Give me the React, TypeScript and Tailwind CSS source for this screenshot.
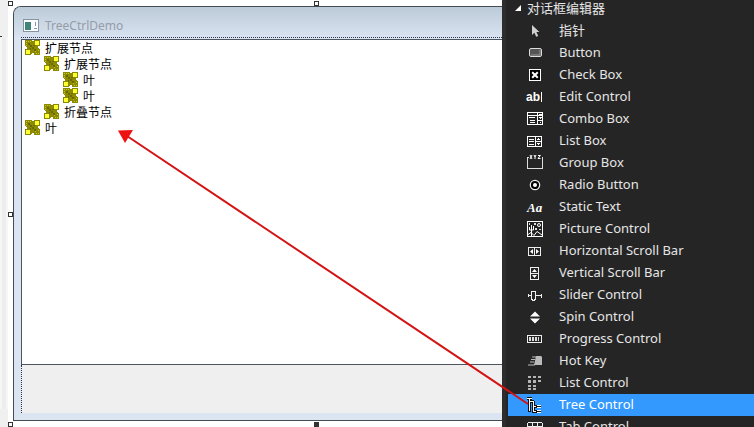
import { type ReactNode } from "react";
import clsx from "clsx";

const FONT = "font-['Noto_Sans','Noto_Sans_CJK_SC',sans-serif]";

const toolIcons: Record<string, ReactNode> = {
  pointer: <path fill="#d0d0d0" d="M5 2v10l2.4-2.2 1.8 4 2-.9-1.8-3.8H12.4z" />,
  button: (
    <>
      <rect x="2.5" y="3.5" width="12" height="8" rx="1.5" fill="#555" stroke="#ddd" />
      <path d="M4 10h9V5" fill="none" stroke="#999" />
    </>
  ),
  check: (
    <>
      <rect x="2.5" y="2.5" width="11" height="11" fill="#000" stroke="#fff" />
      <path d="M5.2 5.2l5.6 5.6M10.8 5.2l-5.6 5.6" stroke="#fff" strokeWidth="2" />
    </>
  ),
  edit: (
    <>
      <text x="-1" y="12" fontSize="12" fontWeight="bold" fontFamily="Liberation Sans" fill="#fff">ab</text>
      <path d="M14.5 3v10" stroke="#fff" />
    </>
  ),
  combo: (
    <path
      fill="none"
      stroke="#fff"
      shapeRendering="crispEdges"
      d="M.5 4.5h15v9H.5zM.5 1.5h15v3H.5zM10.5 2v12M10 9.5h5M2 6.5h6M3 9.5h5M3 11.5h5M12 6.5h3M13 7.5h1M13 11.5h1M12 3.5h3"
    />
  ),
  list: (
    <path
      fill="none"
      stroke="#fff"
      shapeRendering="crispEdges"
      d="M.5 3.5h14v10H.5zM8.5 4v9M9 8.5h5M2 6.5h5M2 8.5h5M2 11.5h5M11 5.5h1M10 6.5h3M10 10.5h3M11 11.5h1"
    />
  ),
  group: (
    <>
      <path fill="none" stroke="#ddd" shapeRendering="crispEdges" d="M2 2.5H.5v11h15v-11H15" />
      <path fill="none" stroke="#fff" d="M3 0l2 4M5 0L3 4M7 0l1 2 1-2M8 2v2M11 .5h2.400L11 3.500h2.500" />
    </>
  ),
  radio: (
    <>
      <circle cx="8" cy="8" r="4.7" fill="#000" stroke="#eee" strokeWidth="1.2" />
      <circle cx="8" cy="8" r="2" fill="#fff" />
    </>
  ),
  text: (
    <text x="0" y="13" fontSize="13" fontStyle="italic" fontWeight="bold" fontFamily="Liberation Serif" fill="#fff">Aa</text>
  ),
  picture: (
    <>
      <rect x=".5" y=".5" width="15" height="15" fill="#222" stroke="#fff" />
      <path fill="none" stroke="#fff" d="M4.5 15V4M2.5 6v3h2M6.5 5v4h-2M1 13.5l3-2 3 3 3-4 5 3.5" />
      <circle cx="12" cy="4" r="1.5" fill="none" stroke="#fff" />
      <path d="M7 2h2v2H7zM8 7h2v2H8zM12 8h2v1h-2zM2 2h1v2H2z" fill="#ddd" />
    </>
  ),
  hscroll: (
    <>
      <path fill="none" stroke="#eee" shapeRendering="crispEdges" d="M1.5 4.5h12v8h-12zM7.5 4v9" />
      <path fill="#fff" d="M6 6v5L3 8.5zM9 6v5l3-2.5z" />
    </>
  ),
  vscroll: (
    <>
      <path fill="none" stroke="#eee" shapeRendering="crispEdges" d="M3.5 2.5h8v12h-8zM3 8.5h9" />
      <path fill="#fff" d="M5 7h5L7.5 4zM5 10h5l-2.5 3z" />
    </>
  ),
  slider: (
    <path fill="none" stroke="#eee" shapeRendering="crispEdges" d="M1 8.5h3M9 8.5h6M14.5 7v4M1.5 7v3M4.5 4.5h4v8h-1v1h-2v-1h-1z" />
  ),
  spin: <path fill="#fff" d="M3 7.6h10L8 2.6zM3 9.4h10l-5 5z" />,
  progress: (
    <>
      <path fill="none" stroke="#eee" shapeRendering="crispEdges" d="M.5 4.5h14v7H.5z" />
      <path fill="#ddd" d="M2 6h2v4H2zM5 6h2v4H5zM8 6h2v4H8zM11 6h1v4h-1z" />
    </>
  ),
  hotkey: (
    <>
      <path fill="#bbb" d="M9 3h5l1 1v8H9L7 12z" />
      <path fill="none" stroke="#bbb" strokeWidth="1.2" d="M5 4h4M4 6.5h4M3 9h4M1 12h7" />
    </>
  ),
  grid: (
    <path
      fill="#b4b4b4"
      d="M1 1h3v2H1zM6 1h3v2H6zM11 1h3v2h-3zM1 5h3v3H1zM6 5h3v3H6zM11 5h3v2h-3zM1 10h3v2H1zM6 10h3v2H6zM1 13h3v2H1zM6 13h3v2H6z"
    />
  ),
  tree: (
    <>
      <path fill="none" stroke="#111" strokeWidth="3" d="M0 1.5h5M2.5 1v14M3 4.5h4M6.5 4v12M7 9.5h7M7 14.5h7" />
      <path
        fill="none"
        stroke="#fff"
        shapeRendering="crispEdges"
        d="M0 1.5h5M2.5 2v12M3 4.5h4M6.5 5v10M7 9.5h2M7 14.5h2M10 8.5h4M10 10.5h4M10 13.5h4M10 15.5h4"
      />
    </>
  ),
  tab: (
    <path
      fill="none"
      stroke="#eee"
      shapeRendering="crispEdges"
      d="M.5 16V4.5l1-1h13l1 1V16M1 7.5h15M5.5 4v3M10.5 4v3"
    />
  ),
};

const tools = [
  { label: "指针", icon: "pointer" },
  { label: "Button", icon: "button" },
  { label: "Check Box", icon: "check" },
  { label: "Edit Control", icon: "edit" },
  { label: "Combo Box", icon: "combo" },
  { label: "List Box", icon: "list" },
  { label: "Group Box", icon: "group" },
  { label: "Radio Button", icon: "radio" },
  { label: "Static Text", icon: "text" },
  { label: "Picture Control", icon: "picture" },
  { label: "Horizontal Scroll Bar", icon: "hscroll" },
  { label: "Vertical Scroll Bar", icon: "vscroll" },
  { label: "Slider Control", icon: "slider" },
  { label: "Spin Control", icon: "spin" },
  { label: "Progress Control", icon: "progress" },
  { label: "Hot Key", icon: "hotkey" },
  { label: "List Control", icon: "grid" },
  { label: "Tree Control", icon: "tree" },
  { label: "Tab Control", icon: "tab" },
];

const nodes = [
  { label: "扩展节点", indent: "pl-[3px]" },
  { label: "扩展节点", indent: "pl-[22px]" },
  { label: "叶", indent: "pl-[41px]" },
  { label: "叶", indent: "pl-[41px]" },
  { label: "折叠节点", indent: "pl-[22px]" },
  { label: "叶", indent: "pl-[3px]" },
];

function NodeIcon() {
  return (
    <svg viewBox="0 0 16 16" className="h-4 w-4 shrink-0" shapeRendering="crispEdges">
      <path fill="#8c8a00" d="M0 0h7v1h2V0h6v6h-2v2h1v1h1v6H9v-2H7v1H6v1H0V9h2V7H1V6H0z" />
      <path fill="#ffff30" d="M10 1h4v4h-4zM1 10h4v4H1z" />
      <path fill="#c8c61c" d="M1 1h1v1H1zM3 1h1v1H3zM1 3h1v1H1zM5 1h1v1H5zM1 5h1v1H1zM13 10h1v1h-1zM11 13h1v1h-1zM13 13h1v1h-1zM10 11h1v1h-1z" />
      <path fill="#6a6800" d="M3 3h2v2H3zM5 5h2v2H5zM7 7h2v2H7zM9 9h2v2H9zM8 5h2v1H8zM5 8h1v2H5z" />
    </svg>
  );
}

function Handle({ className }: { className: string }) {
  return <span className={clsx("absolute h-[5px] w-[5px] border border-[#333]", className)} />;
}

function DialogWindow() {
  return (
    <section className="mt-[6px] mb-[6px] ml-[13px] flex flex-1 flex-col overflow-hidden rounded-tl-lg border-y border-l border-[#444b52] bg-[#dae5f1]">
      <header className="flex h-[30px] items-center gap-[6px] bg-linear-to-b from-[#bccbd9] to-[#d8e2f0] pt-[7px] pl-[9px]">
        <svg viewBox="0 0 16 14" className="h-[14px] w-4" shapeRendering="crispEdges">
          <rect x=".5" y=".5" width="15" height="12" fill="#fff" stroke="#8795a2" />
          <path fill="#3f8579" d="M2 3h6v8H2z" />
          <path fill="#7898b8" d="M12 3h1v4h-1zM11 9h3v1h-3z" />
        </svg>
        <h1 className="font-['Noto_Sans',sans-serif] text-[12px] leading-4 text-[#959da7]">TreeCtrlDemo</h1>
      </header>
      <div className="ml-[7px] flex flex-1 flex-col border-t border-dotted border-[#26334f] pt-px">
        <ul className="flex-1 border border-r-0 border-[#4c5560] bg-white">
          {nodes.map((node, i) => (
            <li key={i} className={clsx("flex h-4 items-start gap-1", node.indent)}>
              <NodeIcon />
              <span className={clsx("text-[12px] leading-[18px] text-black", FONT)}>{node.label}</span>
            </li>
          ))}
        </ul>
        <div className="h-12 border-l border-dotted border-[#26334f] bg-[#efefef]" />
      </div>
      <div className="h-[7px]" />
    </section>
  );
}

function Toolbox() {
  return (
    <aside className={clsx("w-[252px] shrink-0 border-l-4 border-[#2d2d2d] bg-[#252525] pl-[2px] text-[13px] text-[#e6e6e6]", FONT)}>
      <h2 className="flex h-5 items-center gap-[5px] pb-1 pl-[6px] leading-4">
        <svg viewBox="0 0 8 8" className="h-2 w-2">
          <path d="M7 1v6H1z" fill="#fff" />
        </svg>
        对话框编辑器
      </h2>
      <ul>
        {tools.map((tool) => (
          <li key={tool.label}>
            <button
              type="button"
              className={clsx(
                "flex h-[22px] w-full items-center gap-4 pl-[19px] text-left whitespace-nowrap",
                tool.icon === "tree" && "bg-[#3399ff] text-white",
              )}
            >
              <svg viewBox="0 0 16 16" className="h-4 w-4 shrink-0 overflow-visible">
                {toolIcons[tool.icon]}
              </svg>
              {tool.label}
            </button>
          </li>
        ))}
      </ul>
    </aside>
  );
}

export default function App() {
  return (
    <div className="relative flex h-screen overflow-hidden bg-white">
      <main className="relative flex min-w-0 flex-1">
        <div className="absolute inset-y-0 left-0 flex w-2 flex-col bg-[#f0f0f0]">
          <span className="h-9" />
          <span className="h-px w-[2px] bg-[#333]" />
          <span className="flex-1 border-x-2 border-[#f6f6f6] bg-[#ededed]" />
          <span className="h-[18px]" />
        </div>
        <DialogWindow />
        <Handle className="top-px left-2 bg-white" />
        <Handle className="top-px left-[314px] bg-white" />
        <Handle className="top-[212px] left-2 bg-white" />
        <Handle className="bottom-0 left-2 bg-white" />
        <Handle className="bottom-0 left-[314px] bg-[#333]" />
      </main>
      <Toolbox />

      {/* Arrow from the toolbox entry to the tree */}
      <svg viewBox="0 0 754 427" className="pointer-events-none absolute top-0 left-0 h-[427px] w-[754px]">
        <path d="M127 136L528 404" stroke="#d31414" strokeWidth="2" />
        <path d="M118 130.500L133 130l-8 13z" fill="#ee1111" />
      </svg>
    </div>
  );
}
